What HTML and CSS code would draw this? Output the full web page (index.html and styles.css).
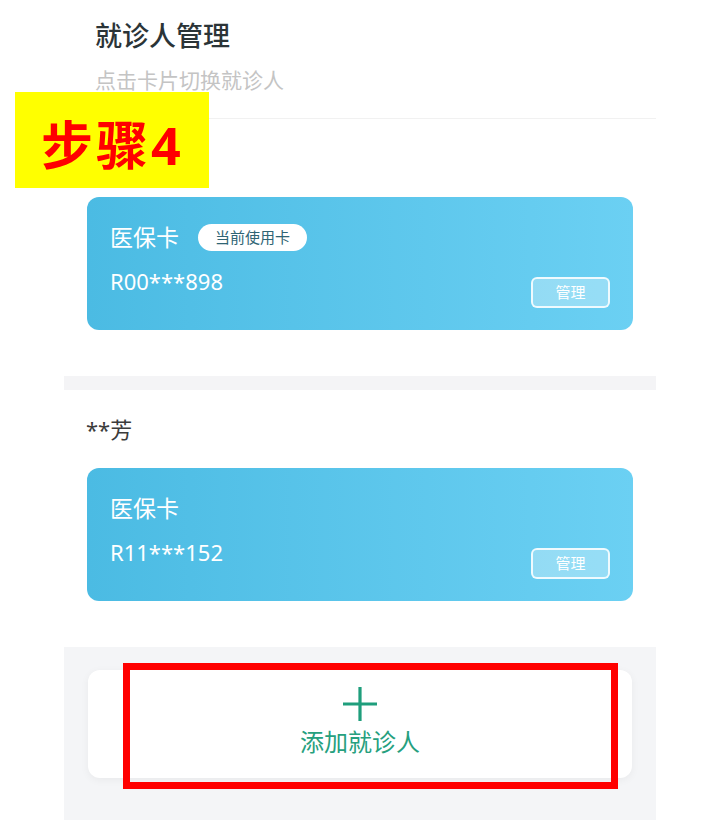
FILE: index.html
```html
<!DOCTYPE html>
<html lang="zh-CN">
<head>
  <meta charset="UTF-8">
  <meta name="viewport" content="width=device-width, initial-scale=1.0">
  <title>就诊人管理</title>
  <link rel="stylesheet" href="styles.css">
</head>
<body>

  <div class="page">
    <!-- 标题 -->
    <div class="header">
      <div class="title">就诊人管理</div>
      <div class="subtitle">点击卡片切换就诊人</div>
    </div>

    <!-- 就诊人 1（姓名被步骤标记遮住） -->
    <div class="patient">
      <div class="patient-name"></div>
      <div class="card">
        <div class="card-head">
          <span class="card-type">医保卡</span>
          <span class="badge">当前使用卡</span>
        </div>
        <div class="card-foot">
          <span class="card-no">R00***898</span>
          <span class="manage-btn">管理</span>
        </div>
      </div>
    </div>

    <div class="gap"></div>

    <!-- 就诊人 2 -->
    <div class="patient">
      <div class="patient-name">**芳</div>
      <div class="card">
        <div class="card-head">
          <span class="card-type">医保卡</span>
        </div>
        <div class="card-foot">
          <span class="card-no">R11***152</span>
          <span class="manage-btn">管理</span>
        </div>
      </div>
    </div>

    <!-- 添加 -->
    <div class="add-area">
      <div class="add-card">
        <svg class="plus" width="34" height="34" viewBox="0 0 34 34">
          <path d="M17 0V34M0 17H34" stroke="#1f9e7c" stroke-width="3.2" fill="none"/>
        </svg>
        <div class="add-text">添加就诊人</div>
      </div>
      <div class="highlight"></div>
    </div>
  </div>

  <div class="step-tag">步骤4</div>

</body>
</html>
```

FILE: styles.css
```css
* { margin:0; padding:0; box-sizing:border-box; }
body { font-family: "Noto Sans", "Noto Sans CJK SC", sans-serif; background:#fff; height:820px; overflow:hidden; position:relative; }

.page { width:592px; margin-left:64px; }

/* 标题 */
.header { margin-left:31px; padding:18px 0 24px; border-bottom:1px solid #f1f1f1; }
.title { font-size:27px; line-height:36px; font-weight:500; color:#2b3437; }
.subtitle { font-size:21px; line-height:28px; margin-top:12px; color:#c4c4c4; }

/* 就诊人 */
.patient { padding:24px 23px 46px; }
.patient:last-of-type { padding-bottom:47px; }
.patient-name { height:30px; font-size:22px; line-height:30px; color:#3c3c3c; margin-left:-1px; }
.card { margin-top:24px; height:133px; padding:24px 23px 22px; border-radius:12px; background:linear-gradient(90deg, #4bbbe3, #6bd0f3); color:#fff; }
.card-head { display:flex; align-items:center; gap:19px; height:32px; }
.card-type { font-size:23px; line-height:32px; }
.badge { height:27px; padding:0 17px; border-radius:14px; background:#fff; color:#2f6474; font-size:15px; line-height:27px; }
.card-foot { display:flex; justify-content:space-between; align-items:flex-start; margin-top:13px; }
.card-no { font-size:22px; line-height:30px; }
.manage-btn { margin-top:11px; width:79px; height:31px; border:2px solid rgba(255,255,255,0.85); border-radius:6px; background:rgba(255,255,255,0.3); font-size:15px; line-height:27px; text-align:center; }

.gap { height:14px; background:#f4f4f6; }

/* 添加就诊人 */
.add-area { position:relative; background:#f4f5f7; padding:23px 24px 60px; }
.add-card { height:108px; border-radius:12px; background:#fff; box-shadow:0 2px 8px rgba(0,0,0,0.05); display:flex; flex-direction:column; align-items:center; padding-top:17px; }
.plus { display:block; }
.add-text { margin-top:5px; font-size:24px; line-height:32px; color:#26a07e; }
.highlight { position:absolute; left:59px; top:16px; width:495px; height:126px; border:7px solid #ff0000; }

/* 步骤标记 */
.step-tag { position:absolute; left:15px; top:92px; width:194px; height:96px; background:#ffff00; color:#ff0000; font-size:52px; font-weight:700; line-height:106px; letter-spacing:3px; padding-left:26px; overflow:hidden; }
```
